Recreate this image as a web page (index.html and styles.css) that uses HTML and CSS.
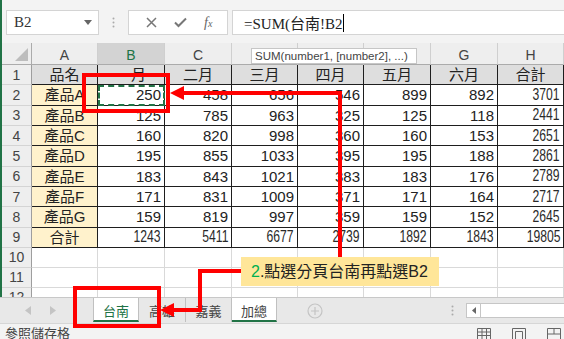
FILE: index.html
```html
<!DOCTYPE html>
<html lang="zh-Hant">
<head>
  <meta charset="UTF-8" />
  <title>SUM 跨工作表</title>
  <link rel="stylesheet" href="styles.css">
</head>
<body>
  <div class="app">
    <div class="toolbar">
      <div class="namebox">
        <span>B2</span>
        <svg width="8" height="5" viewBox="0 0 8 5"><path d="M0 0 H8 L4 5 Z" fill="#666"/></svg>
      </div>
      <div class="grip">
        <svg width="3" height="11" viewBox="0 0 3 11"><circle cx="1.5" cy="1.5" r="1" fill="#aaa"/><circle cx="1.5" cy="5.5" r="1" fill="#aaa"/><circle cx="1.5" cy="9.5" r="1" fill="#aaa"/></svg>
      </div>
      <div class="fbtns">
        <svg width="11" height="11" viewBox="0 0 11 11"><path d="M1 1 L10 10 M10 1 L1 10" stroke="#777" stroke-width="1.5"/></svg>
        <svg width="13" height="11" viewBox="0 0 13 11"><path d="M1 5.5 L4.5 9 L12 1.5" fill="none" stroke="#777" stroke-width="2"/></svg>
        <span class="fx">f<small>x</small></span>
      </div>
      <div class="finput">=SUM(台南!B2<span class="cursor"></span></div>
    </div>

    <div class="sheet">
      <div class="corner"><i></i></div>
      <div class="ch">A</div><div class="ch sel">B</div><div class="ch">C</div><div class="ch">D</div>
      <div class="ch">E</div><div class="ch">F</div><div class="ch">G</div><div class="ch">H</div>

      <div class="rh">1</div>
      <div class="c t hd">品名</div><div class="c t hd">一月</div><div class="c t hd">二月</div><div class="c t hd">三月</div>
      <div class="c t hd">四月</div><div class="c t hd">五月</div><div class="c t hd">六月</div><div class="c t hd">合計</div>

      <div class="rh">2</div>
      <div class="c t nm">產品A</div><div class="c t n copy">250</div><div class="c t n">458</div><div class="c t n">656</div>
      <div class="c t n">546</div><div class="c t n">899</div><div class="c t n">892</div><div class="c t n"><span class="sq">3701</span></div>

      <div class="rh">3</div>
      <div class="c t nm">產品B</div><div class="c t n">125</div><div class="c t n">785</div><div class="c t n">963</div>
      <div class="c t n">325</div><div class="c t n">125</div><div class="c t n">118</div><div class="c t n"><span class="sq">2441</span></div>

      <div class="rh">4</div>
      <div class="c t nm">產品C</div><div class="c t n">160</div><div class="c t n">820</div><div class="c t n">998</div>
      <div class="c t n">360</div><div class="c t n">160</div><div class="c t n">153</div><div class="c t n"><span class="sq">2651</span></div>

      <div class="rh">5</div>
      <div class="c t nm">產品D</div><div class="c t n">195</div><div class="c t n">855</div><div class="c t n">1033</div>
      <div class="c t n">395</div><div class="c t n">195</div><div class="c t n">188</div><div class="c t n"><span class="sq">2861</span></div>

      <div class="rh">6</div>
      <div class="c t nm">產品E</div><div class="c t n">183</div><div class="c t n">843</div><div class="c t n">1021</div>
      <div class="c t n">383</div><div class="c t n">183</div><div class="c t n">176</div><div class="c t n"><span class="sq">2789</span></div>

      <div class="rh">7</div>
      <div class="c t nm">產品F</div><div class="c t n">171</div><div class="c t n">831</div><div class="c t n">1009</div>
      <div class="c t n">371</div><div class="c t n">171</div><div class="c t n">164</div><div class="c t n"><span class="sq">2717</span></div>

      <div class="rh">8</div>
      <div class="c t nm">產品G</div><div class="c t n">159</div><div class="c t n">819</div><div class="c t n">997</div>
      <div class="c t n">359</div><div class="c t n">159</div><div class="c t n">152</div><div class="c t n"><span class="sq">2645</span></div>

      <div class="rh">9</div>
      <div class="c t nm">合計</div><div class="c t n"><span class="sq">1243</span></div><div class="c t n"><span class="sq">5411</span></div><div class="c t n"><span class="sq">6677</span></div>
      <div class="c t n"><span class="sq">2739</span></div><div class="c t n"><span class="sq">1892</span></div><div class="c t n"><span class="sq">1843</span></div><div class="c t n"><span class="sq">19805</span></div>

      <div class="rh">10</div>
      <div class="c"></div><div class="c"></div><div class="c"></div><div class="c"></div>
      <div class="c"></div><div class="c"></div><div class="c"></div><div class="c"></div>

      <div class="rh">11</div>
      <div class="c"></div><div class="c"></div><div class="c"></div><div class="c"></div>
      <div class="c"></div><div class="c"></div><div class="c"></div><div class="c"></div>

      <div class="rh">12</div>
      <div class="c"></div><div class="c"></div><div class="c"></div><div class="c"></div>
      <div class="c"></div><div class="c"></div><div class="c"></div><div class="c"></div>
    </div>
  </div>

  <div class="tabbar">
    <div class="nav">
      <svg width="6" height="9" viewBox="0 0 6 9"><path d="M6 0 V9 L0 4.5 Z" fill="#c4c4c4"/></svg>
      <svg width="6" height="9" viewBox="0 0 6 9"><path d="M0 0 V9 L6 4.5 Z" fill="#c4c4c4"/></svg>
    </div>
    <div class="tab active">台南</div>
    <div class="tab">高雄</div>
    <div class="tab">嘉義</div>
    <div class="tab picked">加總</div>
    <div class="plus">
      <svg width="16" height="16" viewBox="0 0 16 16"><circle cx="8" cy="8" r="7" fill="none" stroke="#c4c4c4" stroke-width="1.2"/><path d="M8 4 V12 M4 8 H12" stroke="#c4c4c4" stroke-width="1.2"/></svg>
    </div>
    <div class="vdots">
      <svg width="3" height="11" viewBox="0 0 3 11"><circle cx="1.5" cy="1.5" r="1" fill="#aaa"/><circle cx="1.5" cy="5.5" r="1" fill="#aaa"/><circle cx="1.5" cy="9.5" r="1" fill="#aaa"/></svg>
    </div>
    <div class="hscroll">
      <div class="sbtn"><svg width="4" height="7" viewBox="0 0 4 7"><path d="M4 0 V7 L0 3.5 Z" fill="#666"/></svg></div>
    </div>
  </div>

  <div class="status">
    <span>參照儲存格</span>
    <div class="views">
      <svg width="14" height="12" viewBox="0 0 14 12"><path d="M0.5 0.5 H13.5 V11.5 H0.5 Z M0.5 4 H13.5 M0.5 7.5 H13.5 M5 0.5 V11.5 M9.5 0.5 V11.5" fill="none" stroke="#666"/></svg>
      <svg width="14" height="12" viewBox="0 0 14 12"><path d="M0.5 0.5 H13.5 V11.5 H0.5 Z M3.5 3.5 H10.5 V11.5 H3.5 Z" fill="none" stroke="#666"/></svg>
      <svg width="14" height="12" viewBox="0 0 14 12"><path d="M0.5 11.5 V0.5 H13.5 V11.5 M7 0.5 V6 M0.5 6 H13.5" fill="none" stroke="#666"/></svg>
    </div>
  </div>

  <div class="tip">SUM(number1, [number2], ...)</div>
  <div class="callout"><b>2</b>.點選分頁台南再點選B2</div>

  <svg class="marks" width="564" height="339" viewBox="0 0 564 339">
    <rect x="84" y="75" width="84" height="36" fill="none" stroke="#f00" stroke-width="4"/>
    <path d="M183 93 H340 V257" fill="none" stroke="#f00" stroke-width="4"/>
    <polygon points="170,93 184,86 184,100" fill="#f00"/>
    <path d="M241 271 H200 V310 H173" fill="none" stroke="#f00" stroke-width="4"/>
    <polygon points="160,310 174,303 174,317" fill="#f00"/>
    <rect x="75" y="288" width="84" height="38" fill="none" stroke="#f00" stroke-width="4"/>
  </svg>
</body>
</html>
```

FILE: styles.css
```css
* {
  box-sizing: border-box;
  margin: 0;
  padding: 0;
}
body {
  position: relative;
  width: 564px;
  height: 339px;
  overflow: hidden;
  background: #fff;
  font-family: 'Liberation Sans', 'Noto Sans CJK TC', sans-serif;
  color: #222;
}
.app {
  border-left: 2px solid #217346;
  height: 297px;
}

/* formula bar */
.toolbar {
  height: 43px;
  background: #f3f3f3;
  display: flex;
  align-items: flex-start;
  padding-top: 10px;
}
.namebox {
  margin-left: 4px;
  width: 93px;
  height: 25px;
  background: #fff;
  border: 1px solid #d4d4d4;
  display: flex;
  align-items: center;
  justify-content: space-between;
  padding: 0 6px 0 7px;
  font: 15px 'Liberation Serif', 'Noto Sans CJK TC', serif;
  color: #333;
}
.grip {
  width: 29px;
  height: 25px;
  display: flex;
  align-items: center;
  justify-content: center;
}
.fbtns {
  width: 100px;
  height: 25px;
  background: #fff;
  border: 1px solid #d4d4d4;
  display: flex;
  align-items: center;
  justify-content: space-around;
  padding: 0 6px 0 8px;
}
.fx {
  font: italic 14px 'Liberation Serif', serif;
  color: #666;
}
.fx small {
  font-size: 10px;
}
.finput {
  flex: 1;
  margin-left: 4px;
  height: 25px;
  background: #fff;
  border: 1px solid #d4d4d4;
  border-right: none;
  display: flex;
  align-items: center;
  padding-left: 11px;
  font: 15px 'Liberation Serif', 'Noto Sans CJK TC', serif;
  color: #222;
}
.cursor {
  display: inline-block;
  width: 1px;
  height: 18px;
  background: #000;
  margin-left: 1px;
}

/* grid */
.sheet {
  display: grid;
  grid-template-columns: 30px 66px 67px 67px 66px 66px 67px 67px 66px;
  grid-template-rows: 22px repeat(9, 20.33px) 20px 20px 20px;
  height: 254px;
  overflow: hidden;
  font-size: 15px;
}
.corner,
.ch,
.rh {
  background: #eeeeee;
  color: #444;
  font-size: 14px;
  display: flex;
  align-items: center;
  justify-content: center;
}
.corner {
  border-right: 1px solid #ababab;
  border-bottom: 1px solid #ababab;
  align-items: flex-end;
  justify-content: flex-end;
  padding: 0 3px 3px 0;
}
.corner i {
  width: 0;
  height: 0;
  border-left: 13px solid transparent;
  border-bottom: 13px solid #bdbdbd;
}
.ch {
  border-right: 1px solid #cfcfcf;
  border-bottom: 1px solid #ababab;
  padding-top: 2px;
}
.ch.sel {
  background: #d3d3d3;
  color: #217346;
}
.rh {
  border-right: 1px solid #9e9e9e;
  border-bottom: 1px solid #d4d4d4;
}
.c {
  border-right: 1px solid #d9d9d9;
  border-bottom: 1px solid #d9d9d9;
  display: flex;
  align-items: center;
  padding: 0 3px;
  line-height: 1;
  white-space: nowrap;
}
.c.t {
  border-color: #1e1e1e;
}
.hd {
  background: #dedede;
  justify-content: center;
}
.nm {
  background: #fff2cc;
  justify-content: center;
}
.n {
  justify-content: flex-end;
}
.sq {
  display: inline-block;
  font-size: 16px;
  transform: scaleX(0.76);
  transform-origin: right center;
  color: #2a2a2a;
}
.copy {
  outline: 2px dashed #217346;
  outline-offset: -2px;
}

/* sheet tabs */
.tabbar {
  height: 26px;
  background: #e8e8e8;
  border-top: 1px solid #c8c8c8;
  display: flex;
  align-items: center;
}
.nav {
  width: 93px;
  display: flex;
  gap: 19px;
  padding-left: 25px;
}
.tab {
  align-self: flex-start;
  height: 24px;
  width: 46px;
  border-right: 1px solid #c0c0c0;
  display: flex;
  align-items: center;
  justify-content: center;
  font-size: 13px;
  color: #444;
}
.tab:nth-child(2) {
  border-left: 1px solid #c0c0c0;
}
.tab:nth-child(3) {
  width: 47px;
}
.tab:nth-child(5) {
  width: 45px;
}
.tab.active,
.tab.picked {
  background: #fff;
  border-bottom: 2px solid #217346;
  padding-top: 2px;
}
.tab.active {
  color: #217346;
}
.plus {
  margin-left: 30px;
  display: flex;
}
.vdots {
  margin-left: 128px;
  display: flex;
}
.hscroll {
  margin-left: 12px;
  flex: 1;
  height: 15px;
  background: #fff;
  border: 1px solid #c6c6c6;
  border-right: none;
  display: flex;
}
.sbtn {
  width: 14px;
  border-right: 1px solid #c6c6c6;
  display: flex;
  align-items: center;
  justify-content: center;
}

/* status bar */
.status {
  height: 16px;
  background: #f3f3f3;
  border-top: 1px solid #d6d6d6;
  display: flex;
  padding-left: 5px;
  font-size: 13px;
  line-height: 13px;
  color: #444;
}
.status span {
  padding-top: 3px;
}
.views {
  margin-left: auto;
  display: flex;
  gap: 21px;
  padding: 4px 3px 0 0;
}

/* overlays */
.tip {
  position: absolute;
  left: 251px;
  top: 48px;
  width: 166px;
  height: 16px;
  background: #fff;
  border: 1px solid #c6c6c6;
  font-size: 11.5px;
  line-height: 14px;
  color: #444;
  padding-left: 3px;
}
.callout {
  position: absolute;
  left: 241px;
  top: 257px;
  width: 198px;
  height: 29px;
  background: #ffe699;
  font-size: 16px;
  line-height: 29px;
  padding-left: 10px;
  color: #222;
}
.callout b {
  font-weight: normal;
  color: #00b050;
}
.marks {
  position: absolute;
  left: 0;
  top: 0;
  pointer-events: none;
}
```
